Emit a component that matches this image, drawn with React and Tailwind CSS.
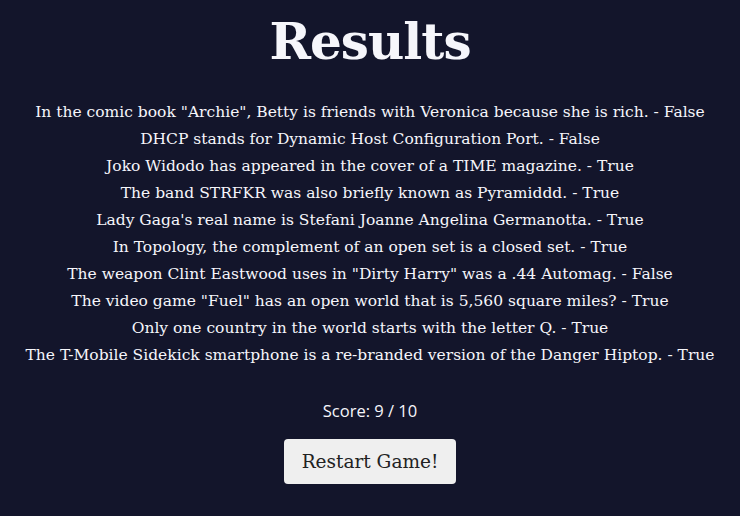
export default function App() {
  const items = [
    'In the comic book "Archie", Betty is friends with Veronica because she is rich. - False',
    'DHCP stands for Dynamic Host Configuration Port. - False',
    'Joko Widodo has appeared in the cover of a TIME magazine. - True',
    'The band STRFKR was also briefly known as Pyramiddd. - True',
    "Lady Gaga's real name is Stefani Joanne Angelina Germanotta. - True",
    'In Topology, the complement of an open set is a closed set. - True',
    'The weapon Clint Eastwood uses in "Dirty Harry" was a .44 Automag. - False',
    'The video game "Fuel" has an open world that is 5,560 square miles? - True',
    'Only one country in the world starts with the letter Q. - True',
    'The T-Mobile Sidekick smartphone is a re-branded version of the Danger Hiptop. - True',
  ];
  return (
    <div className="w-[740px] h-[516px] bg-[#13152b] text-[#f6f6fb] flex flex-col items-center overflow-hidden">
      <h1 className="mt-[12px] text-[50px] leading-[60px] font-bold font-['DejaVu_Serif',serif] tracking-[-1px]">Results</h1>
      <div className="mt-[27px] flex flex-col items-center font-['DejaVu_Serif',serif] text-[15.5px] leading-[27px]">
        {items.map((t, i) => (
          <p key={i} className="whitespace-nowrap">{t}</p>
        ))}
      </div>
      <p className="mt-[32px] font-['Open_Sans',sans-serif] text-[16.5px] leading-[20px]">Score: 9 / 10</p>
      <button className="mt-[18px] w-[172px] h-[45px] bg-[#efefef] rounded-[4px] text-[#222] text-[18.5px] font-['DejaVu_Serif',serif]">Restart Game!</button>
    </div>
  );
}
